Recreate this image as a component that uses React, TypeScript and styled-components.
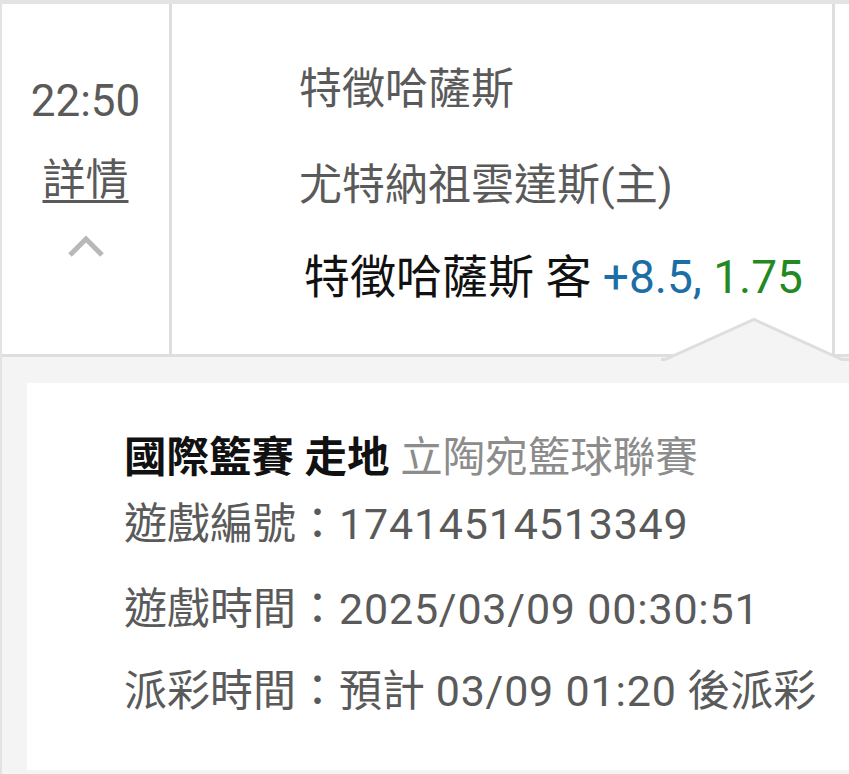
import React from 'react'
import styled, { createGlobalStyle } from 'styled-components'

const GlobalStyle = createGlobalStyle`
  html, body {
    margin: 0;
    padding: 0;
    background: #ffffff;
  }
  body {
    font-family: Roboto, "Noto Sans CJK TC", sans-serif;
    width: 849px;
    height: 774px;
    overflow: hidden;
  }
`

const Page = styled.div`
  position: relative;
  width: 849px;
  height: 774px;
  box-sizing: border-box;
  border-top: 4px solid #e3e3e3;
  border-left: 2px solid #e3e3e3;
  display: flex;
  flex-direction: column;
`

const GameRow = styled.div`
  display: flex;
  border-bottom: 3px solid #dedede;
  height: 353px;
  box-sizing: border-box;
`

const TimeCell = styled.div`
  width: 170px;
  border-right: 3px solid #dedede;
  display: flex;
  flex-direction: column;
  align-items: center;
  padding-top: 67px;
  box-sizing: border-box;
`

const Time = styled.div`
  font-size: 44px;
  line-height: 60px;
  color: #5a5a5a;
`

const DetailLink = styled.a`
  margin-top: 19px;
  font-size: 43px;
  line-height: 60px;
  color: #5a5a5a;
  text-decoration: underline;
  text-decoration-thickness: 3px;
  text-underline-offset: 5px;
`

const Chevron = styled.svg`
  margin-top: 24px;
  width: 38px;
  height: 24px;
`

const TeamsCell = styled.div`
  width: 663px;
  border-right: 3px solid #dedede;
  padding: 55px 0 0 127px;
  box-sizing: border-box;
`

const TeamName = styled.div<{ $gap: number }>`
  margin-top: ${p => p.$gap}px;
  font-size: 43px;
  line-height: 60px;
  color: #5a5a5a;
`

const BetLine = styled.div`
  margin-top: 32px;
  margin-left: 5px;
  font-size: 46px;
  line-height: 60px;
  color: #111111;
  white-space: nowrap;
`

const Handicap = styled.span`
  color: #1c6ea6;
`

const Odds = styled.span`
  color: #238a23;
`

const Pointer = styled.svg`
  position: absolute;
  left: 659px;
  top: 310px;
  width: 190px;
  height: 48px;
`

const Panel = styled.div`
  flex: 1;
  background: #f4f4f4;
  padding: 26px 0 4px 25px;
  display: flex;
`

const Card = styled.div`
  flex: 1;
  background: #ffffff;
  padding: 47px 0 0 97px;
  box-sizing: border-box;
`

const Heading = styled.div`
  font-size: 42.5px;
  line-height: 56px;
  white-space: nowrap;
`

const Strong = styled.span`
  font-weight: 700;
  color: #111111;
`

const League = styled.span`
  color: #8c8c8c;
`

const InfoRow = styled.div<{ $gap: number }>`
  margin-top: ${p => p.$gap}px;
  font-size: 43px;
  line-height: 56px;
  color: #5a5a5a;
  white-space: nowrap;
`

const Num = styled.span`
  letter-spacing: 0.8px;
`

export default function App() {
  return (
    <>
      <GlobalStyle />
      <Page>
        <GameRow>
          <TimeCell>
            <Time>22:50</Time>
            <DetailLink>詳情</DetailLink>
            <Chevron viewBox="0 0 38 24">
              <polyline points="3,21 19,5 35,21" fill="none" stroke="#b8b8b8" strokeWidth="5" />
            </Chevron>
          </TimeCell>
          <TeamsCell>
            <TeamName $gap={0}>特徵哈薩斯</TeamName>
            <TeamName $gap={36}>尤特納祖雲達斯(主)</TeamName>
            <BetLine>
              特徵哈薩斯 客 <Handicap>+8.5,</Handicap> <Odds>1.75</Odds>
            </BetLine>
          </TeamsCell>
        </GameRow>
        <Pointer viewBox="0 0 190 48">
          <polygon points="0,48 0,45 4,45 93,5 181,45 190,45 190,48" fill="#f4f4f4" />
          <polyline points="0,45.5 4,45.5 93,5.5 181,45.5 190,45.5" fill="none" stroke="#dedede" strokeWidth="3" />
        </Pointer>
        <Panel>
          <Card>
            <Heading>
              <Strong>國際籃賽 走地</Strong> <League>立陶宛籃球聯賽</League>
            </Heading>
            <InfoRow $gap={10}>遊戲編號：<Num>17414514513349</Num></InfoRow>
            <InfoRow $gap={29}>遊戲時間：<Num>2025/03/09 00:30:51</Num></InfoRow>
            <InfoRow $gap={26}>派彩時間：預計 <Num>03/09 01:20</Num> 後派彩</InfoRow>
          </Card>
        </Panel>
      </Page>
    </>
  )
}
